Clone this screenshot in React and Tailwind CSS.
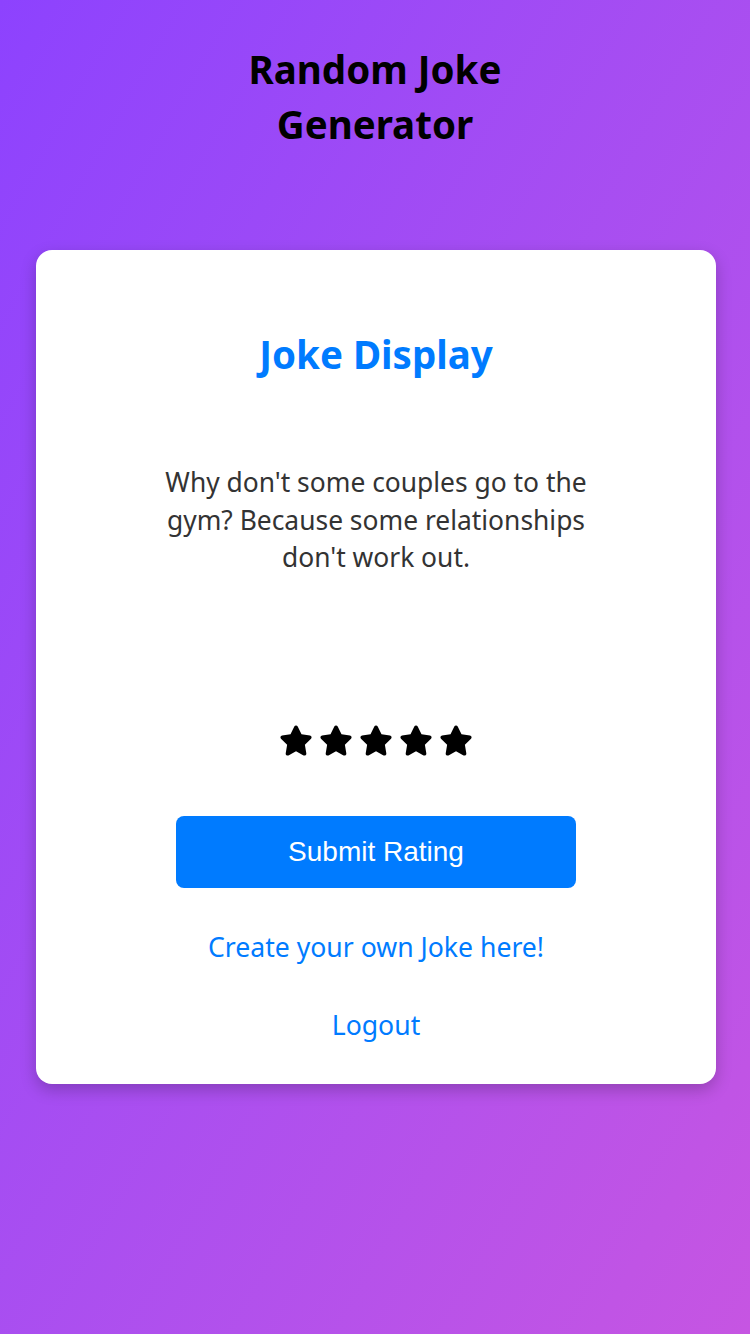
import React from "react";

function Star() {
  return (
    <svg width="34" height="33" viewBox="0 0 576 512" fill="#000">
      <path d="M316.9 18C311.6 7 300.4 0 288.1 0s-23.4 7-28.8 18L195 150.3 51.4 171.5c-12 1.8-22 10.2-25.7 21.7s-.7 24.2 7.9 32.7L137.8 329 113.2 474.7c-2 12 3 24.2 12.9 31.3s23 8 33.8 2.3l128.3-68.5 128.3 68.5c10.8 5.7 23.9 4.9 33.8-2.3s14.9-19.3 12.9-31.3L438.5 329 542.7 225.9c8.6-8.5 11.7-21.2 7.9-32.7s-13.7-19.9-25.7-21.7L381.2 150.3 316.9 18z" />
    </svg>
  );
}

export default function App() {
  return (
    <div
      className="min-h-[1334px] w-full bg-linear-to-br from-[#8d42fe] to-[#c655e2] flex flex-col items-center"
      style={{ fontFamily: '"Noto Sans", "Open Sans", sans-serif' }}
    >
      <h1 className="mt-[42px] w-[320px] text-center text-[38.5px] leading-[55px] font-bold text-black">
        Random Joke Generator
      </h1>
      <div className="mt-[98px] ml-[2px] w-[680px] bg-white rounded-[16px] shadow-[0_6px_16px_rgba(0,0,0,0.22)] flex flex-col items-center pt-[80px] pb-[41px]">
        <h2 className="text-[38.5px] leading-[48px] font-bold text-[#007bff]">Joke Display</h2>
        <p className="mt-[86px] w-[440px] text-center text-[26.4px] leading-[37.5px] text-[#333]">
          Why don't some couples go to the gym? Because some relationships don't work out.
        </p>
        <div className="mt-[147px] flex gap-[6px]">
          <Star />
          <Star />
          <Star />
          <Star />
          <Star />
        </div>
        <button
          className="mt-[59px] w-[400px] h-[72px] bg-[#007bff] rounded-[8px] text-white text-[28px]"
          style={{ fontFamily: '"Liberation Sans", Arial, sans-serif' }}
        >
          Submit Rating
        </button>
        <a className="mt-[41px] text-[26.6px] leading-[36px] text-[#007bff]">Create your own Joke here!</a>
        <a className="mt-[42px] text-[26.6px] leading-[36px] text-[#007bff]">Logout</a>
      </div>
    </div>
  );
}
